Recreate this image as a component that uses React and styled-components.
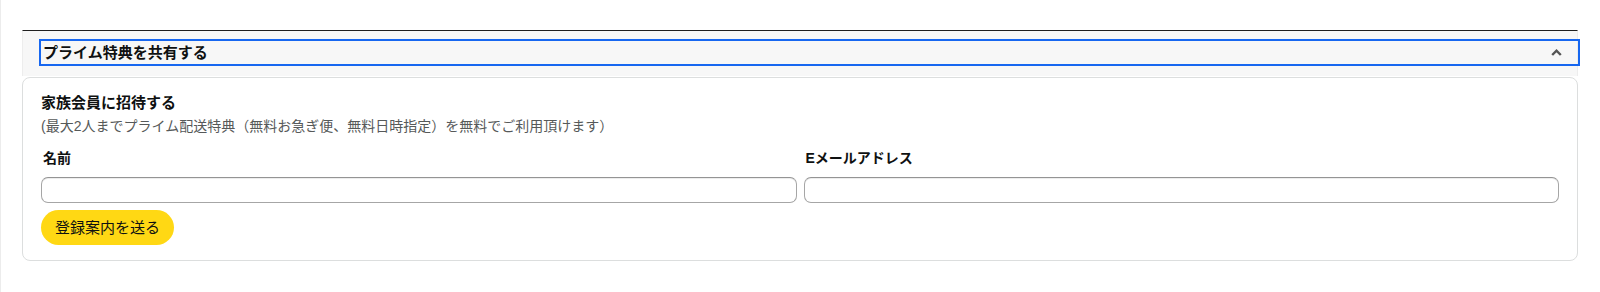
import React from 'react';
import styled, { createGlobalStyle } from 'styled-components';

const GlobalStyle = createGlobalStyle`
  html, body {
    margin: 0;
    padding: 0;
    background: #fff;
  }
  body {
    font-family: "Liberation Sans", Arial, "Noto Sans CJK JP", sans-serif;
    font-size: 14px;
    color: #0f1111;
  }
`;

const Page = styled.div`
  min-height: 292px;
  box-sizing: border-box;
  border-left: 1px solid #ececec;
  padding: 30px 22px 0 21px;
`;

const Accordion = styled.section`
  display: flex;
  flex-direction: column;
`;

const Header = styled.div`
  background: #f7f7f7;
  border-top: 1px solid #1f1f1f;
  border-left: 1px solid #ededed;
  border-right: 1px solid #ededed;
  padding: 10px 0 12px 18px;
`;

const Toggle = styled.a`
  display: flex;
  align-items: center;
  justify-content: space-between;
  height: 23px;
  padding: 0 16px 0 2px;
  margin-right: -1px;
  outline: 2px solid #1767f0;
  color: #0f1111;
  text-decoration: none;
  cursor: pointer;
`;

const HeaderTitle = styled.span`
  font-size: 15px;
  font-weight: 700;
  line-height: 20px;
`;

const Chevron = styled.svg`
  width: 11px;
  height: 7px;
  display: block;
`;

const Card = styled.div`
  margin-top: 1px;
  border: 1px solid #dcdede;
  border-radius: 8px;
  padding: 14px 18px 15px;
`;

const Title = styled.h4`
  margin: 0;
  font-size: 15px;
  font-weight: 700;
  line-height: 22px;
`;

const Note = styled.p`
  margin: 0;
  font-size: 14px;
  line-height: 25px;
  color: #565959;
`;

const FieldRow = styled.div`
  display: grid;
  grid-template-columns: 1fr 1fr;
  column-gap: 7px;
  margin-top: 10px;
`;

const Field = styled.div`
  display: flex;
  flex-direction: column;
`;

const Label = styled.label`
  font-size: 14px;
  font-weight: 700;
  line-height: 19px;
  padding: 0 0 9px 2px;
`;

const Input = styled.input`
  box-sizing: border-box;
  width: 100%;
  height: 26px;
  border: 1px solid #a6a6a6;
  border-top-color: #949494;
  border-radius: 7px;
  box-shadow: 0 1px 0 rgba(0, 0, 0, 0.07) inset;
  padding: 3px 7px;
  font: inherit;
  background: #fff;
  outline: none;
`;

const Button = styled.button`
  margin-top: 7px;
  height: 35px;
  padding: 0 14px;
  border: none;
  border-radius: 100px;
  background: #ffd814;
  color: #0f1111;
  font-family: inherit;
  font-size: 15px;
  line-height: 20px;
  cursor: pointer;
  align-self: flex-start;
`;

const CardBody = styled.div`
  display: flex;
  flex-direction: column;
`;

export default function App() {
  return (
    <>
      <GlobalStyle />
      <Page>
        <Accordion>
          <Header>
            <Toggle>
              <HeaderTitle>プライム特典を共有する</HeaderTitle>
              <Chevron viewBox="0 0 11 7">
                <polyline
                  points="1.2,6 5.5,1.7 9.8,6"
                  fill="none"
                  stroke="#555"
                  strokeWidth="2.4"
                />
              </Chevron>
            </Toggle>
          </Header>
          <Card>
            <CardBody>
              <Title>家族会員に招待する</Title>
              <Note>(最大2人までプライム配送特典（無料お急ぎ便、無料日時指定）を無料でご利用頂けます）</Note>
              <FieldRow>
                <Field>
                  <Label htmlFor="name">名前</Label>
                  <Input id="name" type="text" />
                </Field>
                <Field>
                  <Label htmlFor="email">Eメールアドレス</Label>
                  <Input id="email" type="email" />
                </Field>
              </FieldRow>
              <Button>登録案内を送る</Button>
            </CardBody>
          </Card>
        </Accordion>
      </Page>
    </>
  );
}
